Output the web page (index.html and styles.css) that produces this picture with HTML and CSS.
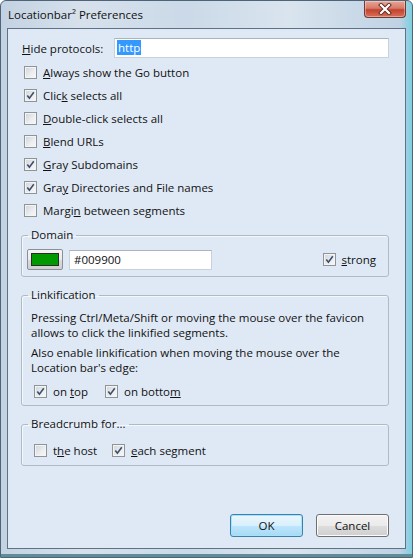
FILE: index.html
```html
<!DOCTYPE html>
<html lang="en">

<head>
    <meta charset="UTF-8">
    <title>Locationbar² Preferences</title>
    <link rel="stylesheet" href="styles.css">
</head>

<body>
    <div class="window">
        <div class="titlebar">
            <span class="title">Locationbar² Preferences</span>
            <div class="close">
                <svg width="14" height="12" viewBox="0 0 14 12">
                    <path d="M3 2 L11 10 M11 2 L3 10" stroke="#5a2a22" stroke-width="4" stroke-linecap="square" />
                    <path d="M3 2 L11 10 M11 2 L3 10" stroke="#fff" stroke-width="2.2" stroke-linecap="square" />
                </svg>
            </div>
        </div>

        <div class="client">
            <div class="proto-row">
                <label class="proto-label"><u>H</u>ide protocols:</label>
                <div class="textbox proto-box"><span class="sel">http</span></div>
            </div>

            <div class="checklist">
                <div class="check"><span class="cb"></span><span><u>A</u>lways show the Go button</span></div>
                <div class="check"><span class="cb on"><svg viewBox="0 0 11 11"><path d="M2.3 5.4 L4.4 8.2 L8.8 2.2" /></svg></span><span>Clic<u>k</u> selects all</span></div>
                <div class="check"><span class="cb"></span><span><u>D</u>ouble-click selects all</span></div>
                <div class="check"><span class="cb"></span><span><u>B</u>lend URLs</span></div>
                <div class="check"><span class="cb on"><svg viewBox="0 0 11 11"><path d="M2.3 5.4 L4.4 8.2 L8.8 2.2" /></svg></span><span><u>G</u>ray Subdomains</span></div>
                <div class="check"><span class="cb on"><svg viewBox="0 0 11 11"><path d="M2.3 5.4 L4.4 8.2 L8.8 2.2" /></svg></span><span>Gra<u>y</u> Directories and File names</span></div>
                <div class="check"><span class="cb"></span><span>Margi<u>n</u> between segments</span></div>
            </div>

            <fieldset class="group domain">
                <legend>Domain</legend>
                <div class="domain-row">
                    <div class="color-btn"><span class="swatch"></span></div>
                    <div class="textbox domain-box">#009900</div>
                    <div class="check strong"><span class="cb on"><svg viewBox="0 0 11 11"><path d="M2.3 5.4 L4.4 8.2 L8.8 2.2" /></svg></span><span><u>s</u>trong</span></div>
                </div>
            </fieldset>

            <fieldset class="group linkify">
                <legend>Linkification</legend>
                <p>Pressing Ctrl/Meta/Shift or moving the mouse over the favicon allows to click the linkified segments.</p>
                <p>Also enable linkification when moving the mouse over the Location bar's edge:</p>
                <div class="opts">
                    <div class="check opt-top"><span class="cb on"><svg viewBox="0 0 11 11"><path d="M2.3 5.4 L4.4 8.2 L8.8 2.2" /></svg></span><span>on <u>t</u>op</span></div>
                    <div class="check"><span class="cb on"><svg viewBox="0 0 11 11"><path d="M2.3 5.4 L4.4 8.2 L8.8 2.2" /></svg></span><span>on botto<u>m</u></span></div>
                </div>
            </fieldset>

            <fieldset class="group crumbs">
                <legend>Breadcrumb for...</legend>
                <div class="opts">
                    <div class="check opt-host"><span class="cb"></span><span>t<u>h</u>e host</span></div>
                    <div class="check"><span class="cb on"><svg viewBox="0 0 11 11"><path d="M2.3 5.4 L4.4 8.2 L8.8 2.2" /></svg></span><span><u>e</u>ach segment</span></div>
                </div>
            </fieldset>

            <div class="buttons">
                <div class="btn default">OK</div>
                <div class="btn">Cancel</div>
            </div>
        </div>
    </div>
</body>

</html>
```

FILE: styles.css
```css
body {
    margin: 0;
    padding: 0;
    font-family: 'Open Sans', 'Noto Sans', sans-serif;
    font-size: 11.5px;
    color: #111;
    background: #fff;
}

.window {
    box-sizing: border-box;
    width: 413px;
    height: 558px;
    display: flex;
    flex-direction: column;
    padding: 0 6px 8px 6px;
    border: 1px solid #4f6477;
    border-radius: 6px 6px 0 0;
    background: linear-gradient(to right, #c3d2e2 0%, #d6e1ec 20%, #cbd9e8 45%, #d9e4ee 70%, #c0d2e4 97%, #7ccfe0 100%);
    box-shadow: inset 0 -3px 0 #5e8c98;
}

/* title bar */

.titlebar {
    height: 27px;
    display: flex;
    justify-content: space-between;
    align-items: flex-start;
}

.title {
    margin: 6px 0 0 1px;
    line-height: 16px;
}

.close {
    width: 42px;
    height: 17px;
    display: flex;
    align-items: center;
    justify-content: center;
    box-sizing: border-box;
    border: 1px solid #6d3a34;
    border-top: none;
    border-radius: 0 0 4px 4px;
    background: linear-gradient(to bottom, #e8a597 0%, #d67a68 45%, #c2432e 55%, #d8705a 100%);
    box-shadow: inset 0 0 0 1px rgba(255, 255, 255, 0.35);
}

.close svg {
    display: block;
}

/* client area */

.client {
    flex: 1;
    display: flex;
    flex-direction: column;
    padding: 9px 16px 11px 13px;
    border: 1px solid #5f7184;
    background: #dfe9f5;
}

.proto-row {
    display: flex;
    align-items: center;
    height: 20px;
}

.proto-label {
    width: 92px;
    padding-left: 1px;
}

.textbox {
    box-sizing: border-box;
    background: #fff;
    border: 1px solid #c9d2dc;
    border-top-color: #abb4be;
    line-height: 16px;
}

.proto-box {
    flex: 1;
    height: 20px;
    padding: 1px 2px;
}

.sel {
    background: #3399ff;
    color: #fff;
    padding: 0 1px;
}

.checklist {
    margin-top: 3px;
}

.check {
    display: flex;
    align-items: center;
    height: 23px;
}

.checklist .check {
    padding-left: 3px;
}

.cb {
    box-sizing: border-box;
    width: 13px;
    height: 13px;
    margin-right: 6px;
    flex: none;
    border: 1px solid #8f9499;
    background: linear-gradient(135deg, #cfd3d9 0%, #eceef0 60%, #f8f8f8 100%);
    box-shadow: inset 0 0 0 1px #f4f4f4;
}

.cb svg {
    display: block;
    width: 11px;
    height: 11px;
}

.cb svg path {
    fill: none;
    stroke: #3c4f6a;
    stroke-width: 1.6;
}

/* group boxes */

.group {
    margin: 10px 0 0 0;
    padding: 6px;
    min-inline-size: 0;
    border: 1px solid #aebac6;
    border-radius: 3px;
    box-shadow: inset 1px 1px 0 #f4f8fc;
}

.group legend {
    padding: 0 3px;
    line-height: 16px;
}

.domain {
    margin-top: 5px;
}

.domain-row {
    display: flex;
    align-items: center;
    height: 21px;
}

.color-btn {
    box-sizing: border-box;
    width: 36px;
    height: 21px;
    margin-left: -1px;
    display: flex;
    align-items: center;
    justify-content: center;
    border: 1px solid #8a9097;
    border-radius: 2px;
    background: linear-gradient(to bottom, #f4f4f4 0%, #ebebeb 50%, #dcdcdc 51%, #cfcfcf 100%);
}

.swatch {
    width: 28px;
    height: 13px;
    box-sizing: border-box;
    border: 1px solid #2b2b2b;
    background: #009900;
}

.domain-box {
    width: 143px;
    height: 20px;
    margin-left: 6px;
    padding: 1px 4px;
}

.strong {
    margin-left: auto;
    margin-right: 6px;
}

.linkify {
    padding-top: 7px;
    padding-bottom: 5px;
}

.linkify p {
    margin: 0 0 5px 0;
    padding-left: 3px;
    line-height: 15px;
}

.opts {
    display: flex;
    align-items: center;
    padding-left: 6px;
}

.opts .check {
    height: 18px;
}

.linkify .opts {
    margin-top: 7px;
}

.opt-top {
    width: 71px;
}

.crumbs {
    padding-top: 9px;
}

.opt-host {
    width: 78px;
}

/* dialog buttons */

.buttons {
    margin-top: auto;
    display: flex;
    justify-content: flex-end;
    gap: 13px;
}

.btn {
    box-sizing: border-box;
    width: 73px;
    height: 23px;
    display: flex;
    align-items: center;
    justify-content: center;
    border: 1px solid #707070;
    border-radius: 3px;
    background: linear-gradient(to bottom, #f2f2f2 0%, #ebebeb 50%, #dddddd 51%, #cfcfcf 100%);
    box-shadow: inset 0 0 0 1px #fbfbfb;
}

.btn.default {
    border-color: #3c7fb1;
    box-shadow: inset 0 0 0 1px #a6e3f5;
    background: linear-gradient(to bottom, #eaf6fd 0%, #d9f0fc 50%, #bee6fd 51%, #a7d9f5 100%);
}
```
